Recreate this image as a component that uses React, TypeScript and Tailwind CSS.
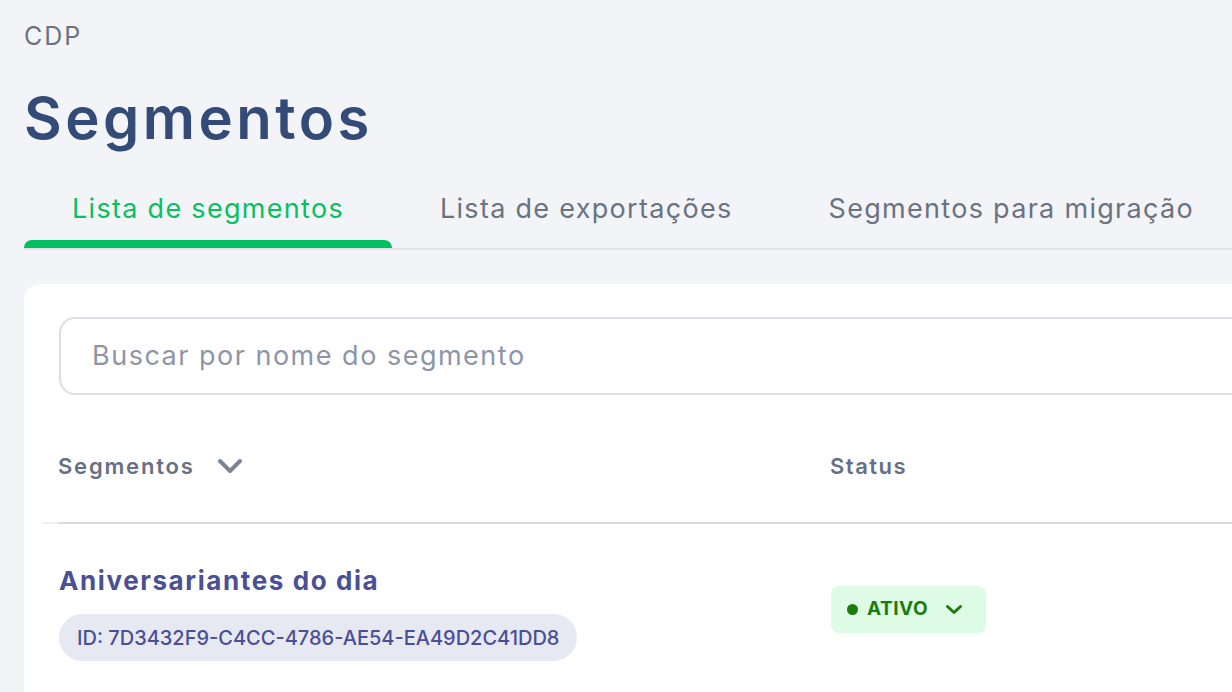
import React from 'react';

const font = { fontFamily: 'Inter, "Noto Sans", sans-serif' };

const Chevron = ({ className, w, h, sw }: { className: string; w: number; h: number; sw: number }) => (
  <svg width={w} height={h} viewBox={`0 0 ${w} ${h}`} className={className} fill="none">
    <polyline
      points={`${sw / 2 + 1},${sw / 2 + 1} ${w / 2},${h - sw / 2 - 1} ${w - sw / 2 - 1},${sw / 2 + 1}`}
      stroke="currentColor"
      strokeWidth={sw}
      strokeLinecap="round"
      strokeLinejoin="round"
    />
  </svg>
);

const tabs = ['Lista de segmentos', 'Lista de exportações', 'Segmentos para migração'];

export default function App() {
  return (
    <div className="h-[692px] w-[1232px] overflow-hidden bg-[#f3f4f8]" style={font}>
      <div className="w-[1400px] pl-6">
        <div className="pt-[19px] text-[25px] leading-[34px] tracking-[2px] text-[#6b7280]">CDP</div>
        <h1 className="mt-[31px] text-[58px] font-semibold leading-[68px] tracking-[3.5px] text-[#344a77]">
          Segmentos
        </h1>

        <div className="mt-[38px] flex border-b-2 border-[#e3e5ea]">
          {tabs.map((t, i) => (
            <div key={t} className="flex flex-col">
              <div
                className={
                  i === 0
                    ? 'px-12 pb-[12px] text-[27px] leading-[38px] tracking-[1.3px] text-[#08bf62]'
                    : 'px-12 pb-[12px] text-[27px] leading-[38px] tracking-[1.3px] text-[#6b7280]'
                }
              >
                {t}
              </div>
              <div className={i === 0 ? 'h-2 rounded-t-lg bg-[#00bf63]' : 'h-2'} />
            </div>
          ))}
        </div>

        <div className="mt-[34px] rounded-tl-2xl bg-white pb-16 pl-[35px] pt-[33px]">
          <div className="flex h-[78px] items-center rounded-2xl border-2 border-[#dcdee4] pl-[31px]">
            <input
              className="w-full bg-transparent text-[27px] tracking-[1.5px] text-[#374151] outline-none placeholder:text-[#8d95a7]"
              placeholder="Buscar por nome do segmento"
              style={font}
            />
          </div>

          <div className="-ml-[17px] mt-[55px] border-b-2 border-[#eef0f3]">
            <div className="-mb-[2px] ml-4 flex border-b-2 border-[#d9dbe2] pb-[40px]">
              <div className="flex w-[772px] items-center gap-[22px] text-[22px] font-semibold leading-[32px] tracking-[1.8px] text-[#667085]">
                <span>Segmentos</span>
                <Chevron className="text-[#7b8494]" w={26} h={16} sw={4} />
              </div>
              <div className="text-[22px] font-semibold leading-[32px] tracking-[1.5px] text-[#667085]">Status</div>
            </div>
          </div>

          <div className="flex items-center pt-[40px]">
            <div className="flex w-[772px] flex-col items-start">
              <div className="text-[26px] font-bold leading-[34px] tracking-[1.6px] text-[#4a4f96]">
                Aniversariantes do dia
              </div>
              <div className="mt-[16px] flex h-[47px] items-center rounded-full bg-[#e6e9f1] px-[18px] text-[20px] font-medium text-[#4a4f96]">
                ID: 7D3432F9-C4CC-4786-AE54-EA49D2C41DD8
              </div>
            </div>
            <div className="mt-[-6px] flex h-[47px] items-center rounded-lg bg-[#defbe6] pl-4 pr-[23px] text-[#1c7c10]">
              <span className="h-[11px] w-[11px] rounded-full bg-[#1c7c10]" />
              <span className="ml-[9px] text-[19px] font-bold tracking-[0.5px]">ATIVO</span>
              <Chevron className="ml-[17px]" w={18} h={11} sw={3} />
            </div>
          </div>
        </div>
      </div>
    </div>
  );
}
